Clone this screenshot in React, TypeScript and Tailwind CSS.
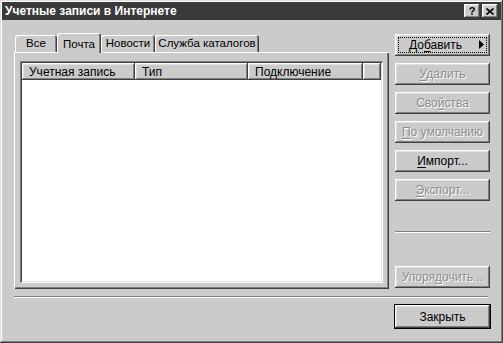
import React from 'react';

const raised =
  'shadow-[inset_-1px_-1px_0_#404040,inset_1px_1px_0_#ffffff,inset_-2px_-2px_0_#808080,inset_2px_2px_0_#dfdfdf]';
const sunken =
  'shadow-[inset_1px_1px_0_#808080,inset_-1px_-1px_0_#ffffff,inset_2px_2px_0_#404040,inset_-2px_-2px_0_#dfdfdf]';

interface BtnProps {
  label: string;
  u?: number;
  disabled?: boolean;
  isDefault?: boolean;
  focused?: boolean;
  arrow?: boolean;
}

const Btn: React.FC<BtnProps> = ({ label, u, disabled, isDefault, focused, arrow }) => {
  const chars =
    u === undefined ? (
      label
    ) : (
      <>
        {label.slice(0, u)}
        <span className="underline underline-offset-[2px]">{label[u]}</span>
        {label.slice(u + 1)}
      </>
    );

  return (
    <div
      className={`relative flex h-[22px] w-[95px] items-center justify-center bg-[#cbcbcb] text-[12px] ${raised} ${
        isDefault ? 'h-[23px] outline outline-1 outline-black' : ''
      } ${disabled ? 'text-[#8e8e8e] [text-shadow:1px_1px_0_#ffffff]' : 'text-black'}`}
    >
      {focused && (
        <div className="absolute inset-[3px] border border-dotted border-black" />
      )}
      <span className={arrow ? 'mr-[14px]' : ''}>{chars}</span>
      {arrow && (
        <svg className="absolute right-[6px] top-[6px]" width="5" height="9" viewBox="0 0 5 9">
          <path d="M0 0 L5 4.5 L0 9 Z" fill="#000" />
        </svg>
      )}
    </div>
  );
};

const tabs = [
  { name: 'Все', w: 'w-[42px]' },
  { name: 'Почта', w: 'w-[44px]', active: true },
  { name: 'Новости', w: 'w-[54px]' },
  { name: 'Служба каталогов', w: 'w-[104px]' },
];

const columns = [
  { name: 'Учетная запись', w: 'w-[113px]' },
  { name: 'Тип', w: 'w-[113px]' },
  { name: 'Подключение', w: 'w-[115px]' },
];

export default function App() {
  return (
    <div
      className={`flex h-[343px] w-[503px] flex-col bg-[#cbcbcb] p-[2px] font-['Liberation_Sans',Arial,sans-serif] shadow-[inset_-1px_-1px_0_#404040,inset_1px_1px_0_#dfdfdf,inset_-2px_-2px_0_#808080,inset_2px_2px_0_#ffffff]`}
    >
      {/* title bar */}
      <div className="flex h-[18px] items-center justify-between bg-[#3a3a3a] pl-[3px] pr-[3px]">
        <span className="text-[12px] font-bold text-white">Учетные записи в Интернете</span>
        <div className="flex gap-[2px]">
          <div className={`flex h-[14px] w-[16px] items-center justify-center bg-[#cbcbcb] text-[11px] font-bold leading-none text-black ${raised}`}>
            ?
          </div>
          <div className={`flex h-[14px] w-[16px] items-center justify-center bg-[#cbcbcb] ${raised}`}>
            <svg width="8" height="7" viewBox="0 0 8 7">
              <path d="M0.5 0.5 L7.5 6.5 M7.5 0.5 L0.5 6.5" stroke="#000" strokeWidth="1.6" />
            </svg>
          </div>
        </div>
      </div>

      <div className="flex w-[488px] flex-col pl-[12px]">
        <div className="mt-[13px] flex">
          {/* tabs + panel */}
          <div className="flex w-[375px] flex-col">
            <div className="flex h-[19px] items-end pl-[1px]">
              {tabs.map((t) =>
                t.active ? (
                  <div
                    key={t.name}
                    className={`relative z-10 -mb-px flex h-[20px] ${t.w} items-start justify-center rounded-t-[3px] bg-[#cbcbcb] pt-[3px] text-[11.5px] text-black shadow-[inset_1px_1px_0_#ffffff,inset_-1px_0_0_#404040,inset_-2px_0_0_#808080]`}
                  >
                    {t.name}
                  </div>
                ) : (
                  <div
                    key={t.name}
                    className={`flex h-[17px] ${t.w} items-center justify-center rounded-t-[3px] bg-[#cbcbcb] text-[11.5px] text-black shadow-[inset_1px_1px_0_#ffffff,inset_-1px_0_0_#404040,inset_-2px_0_0_#808080]`}
                  >
                    {t.name}
                  </div>
                )
              )}
            </div>
            <div className="h-[237px] px-[6px] pb-[6px] pt-[9px] shadow-[inset_1px_1px_0_#ffffff,inset_-1px_-1px_0_#404040,inset_-2px_-2px_0_#808080]">
              <div className={`flex h-full flex-col bg-white p-[2px] ${sunken}`}>
                <div className="flex h-[17px]">
                  {columns.map((c) => (
                    <div
                      key={c.name}
                      className={`flex h-full ${c.w} items-center bg-[#cbcbcb] pl-[7px] text-[12px] text-black ${raised}`}
                    >
                      {c.name}
                    </div>
                  ))}
                  <div className={`h-full flex-1 bg-[#cbcbcb] ${raised}`} />
                </div>
              </div>
            </div>
          </div>

          {/* buttons */}
          <div className="ml-[6px] flex w-[95px] flex-col pt-[1px]">
            <Btn label="Добавить" u={2} focused arrow />
            <div className="mt-[7px]">
              <Btn label="Удалить" u={0} disabled />
            </div>
            <div className="mt-[7px]">
              <Btn label="Свойства" u={3} disabled />
            </div>
            <div className="mt-[7px]">
              <Btn label="По умолчанию" u={0} disabled />
            </div>
            <div className="mt-[7px]">
              <Btn label="Импорт..." u={0} />
            </div>
            <div className="mt-[7px]">
              <Btn label="Экспорт..." u={0} disabled />
            </div>
            <div className="mt-[30px] h-[2px] border-b border-t border-b-white border-t-[#808080]" />
            <div className="mt-[33px]">
              <Btn label="Упорядочить..." u={5} disabled />
            </div>
          </div>
        </div>

        <div className="mt-[7px] h-[2px] w-[474px] border-b border-t border-b-white border-t-[#808080]" />

        <div className="mt-[7px] flex justify-end">
          <Btn label="Закрыть" isDefault />
        </div>
      </div>
    </div>
  );
}
